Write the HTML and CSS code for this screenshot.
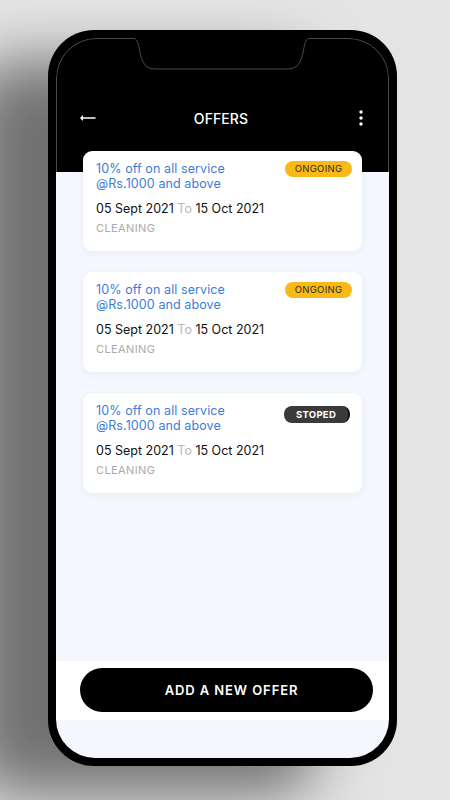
FILE: index.html
```html
<!DOCTYPE html>
<html lang="en">
<head>
    <meta charset="UTF-8">
    <meta name="viewport" content="width=device-width, initial-scale=1.0">
    <title>Offers</title>
    <link rel="stylesheet" href="styles.css">
</head>
<body>
    <div class="phone">
        <div class="screen">
            <svg class="notch" width="333" height="134" viewBox="0 0 333 134" aria-hidden="true">
                <path d="M0.5 134 V40 A40 40 0 0 1 40 0.5 H77 C81 0.5 82 4 83.5 12 C86 26 90 31 100 31 H231 C241 31 245 26 247.5 12 C249 4 250 0.5 254 0.5 H293 A40 40 0 0 1 332.5 40 V134" fill="none" stroke="#4a4a4a" stroke-width="1"/>
            </svg>

            <header class="topbar">
                <button class="icon-btn back" aria-label="Back">
                    <svg width="17" height="8" viewBox="0 0 17 8">
                        <path d="M4 1 L1 4 L4 7 Z" fill="#fff"/>
                        <line x1="2" y1="4" x2="16.5" y2="4" stroke="#fff" stroke-width="1.6"/>
                    </svg>
                </button>
                <h1>OFFERS</h1>
                <button class="icon-btn more" aria-label="More">
                    <svg width="4" height="16" viewBox="0 0 4 16">
                        <circle cx="2" cy="2" r="1.7" fill="#fff"/>
                        <circle cx="2" cy="8" r="1.7" fill="#fff"/>
                        <circle cx="2" cy="14" r="1.7" fill="#fff"/>
                    </svg>
                </button>
            </header>

            <main class="offers">
                <div class="offer-card">
                    <div class="offer-head">
                        <p class="offer-title"><span>10% off on all service</span><span>@Rs.1000 and above</span></p>
                        <span class="badge ongoing">ONGOING</span>
                    </div>
                    <p class="offer-dates">05 Sept 2021 <span class="to">To</span> 15 Oct 2021</p>
                    <p class="offer-cat">CLEANING</p>
                </div>

                <div class="offer-card">
                    <div class="offer-head">
                        <p class="offer-title"><span>10% off on all service</span><span>@Rs.1000 and above</span></p>
                        <span class="badge ongoing">ONGOING</span>
                    </div>
                    <p class="offer-dates">05 Sept 2021 <span class="to">To</span> 15 Oct 2021</p>
                    <p class="offer-cat">CLEANING</p>
                </div>

                <div class="offer-card">
                    <div class="offer-head">
                        <p class="offer-title"><span>10% off on all service</span><span>@Rs.1000 and above</span></p>
                        <span class="badge stopped">STOPED</span>
                    </div>
                    <p class="offer-dates">05 Sept 2021 <span class="to">To</span> 15 Oct 2021</p>
                    <p class="offer-cat">CLEANING</p>
                </div>
            </main>

            <div class="bottom-bar">
                <button class="add-btn">ADD A NEW OFFER</button>
            </div>
        </div>
    </div>
</body>
</html>
```

FILE: styles.css
```css
:root {
    --frame: #000000;
    --page: #f4f7fd;
    --card: #ffffff;
    --blue: #3b7dd8;
    --text: #111111;
    --muted: #b8b8b8;
    --yellow: #fbb917;
    --dark: #3a3a3a;
}

* {
    margin: 0;
    padding: 0;
    box-sizing: border-box;
}

body {
    width: 450px;
    height: 800px;
    overflow: hidden;
    background: #e4e4e4;
    font-family: "Inter", "Open Sans", sans-serif;
    padding: 30px 0 0 48px;
}

.phone {
    width: 349px;
    height: 736px;
    background: var(--frame);
    border-radius: 46px;
    padding: 8px;
    box-shadow: -80px 30px 60px rgba(0, 0, 0, 0.5);
}

.screen {
    position: relative;
    height: 100%;
    border-radius: 39px;
    overflow: hidden;
    background: linear-gradient(#000 0 134px, var(--page) 134px);
    display: flex;
    flex-direction: column;
}

.notch {
    position: absolute;
    top: 0;
    left: 0;
    pointer-events: none;
}

.topbar {
    display: grid;
    grid-template-columns: 1fr auto 1fr;
    align-items: center;
    height: 113px;
    padding: 70px 26px 23px 23px;
}

.topbar h1 {
    color: #fff;
    font-size: 14px;
    font-weight: 500;
    letter-spacing: 0.1px;
}

.icon-btn {
    background: transparent;
    border: none;
    padding: 0;
    display: flex;
    align-items: center;
    height: 20px;
}

.icon-btn.more {
    justify-self: end;
}

.offers {
    flex: 1;
    display: flex;
    flex-direction: column;
    gap: 21px;
    padding: 0 27px;
}

.offer-card {
    background: var(--card);
    border-radius: 9px;
    padding: 10px 10px 15px 13px;
    box-shadow: 0 2px 6px rgba(40, 60, 110, 0.06);
}

.offer-head {
    display: flex;
    justify-content: space-between;
    align-items: flex-start;
}

.offer-title {
    display: flex;
    flex-direction: column;
    color: var(--blue);
    font-size: 12.5px;
    line-height: 15px;
    letter-spacing: 0.1px;
}

.badge {
    height: 16px;
    width: 67px;
    border-radius: 8px;
    font-size: 9.5px;
    line-height: 16px;
    text-align: center;
    letter-spacing: 0.3px;
}

.badge.ongoing {
    background: var(--yellow);
    color: #2a2a2a;
}

.badge.stopped {
    margin-top: 3px;
    margin-right: 2px;
    width: 66px;
    height: 17px;
    line-height: 17px;
    background: var(--dark);
    color: #fff;
    font-weight: 700;
    border-right: 2px solid #111;
}

.offer-dates {
    margin-top: 9px;
    color: var(--text);
    font-size: 12.5px;
    line-height: 17px;
}

.offer-dates .to {
    color: var(--muted);
}

.offer-cat {
    margin-top: 4px;
    color: #aaaaaa;
    font-size: 11px;
    line-height: 15px;
    letter-spacing: 0.4px;
}

.bottom-bar {
    background: #fff;
    padding: 7px 16px 8px 24px;
    margin-bottom: 38px;
}

.add-btn {
    width: 100%;
    height: 44px;
    border: none;
    border-radius: 22px;
    background: #000;
    color: #fff;
    font-family: "Inter", sans-serif;
    font-size: 13px;
    font-weight: 600;
    letter-spacing: 0.9px;
    padding-left: 10px;
}
```
